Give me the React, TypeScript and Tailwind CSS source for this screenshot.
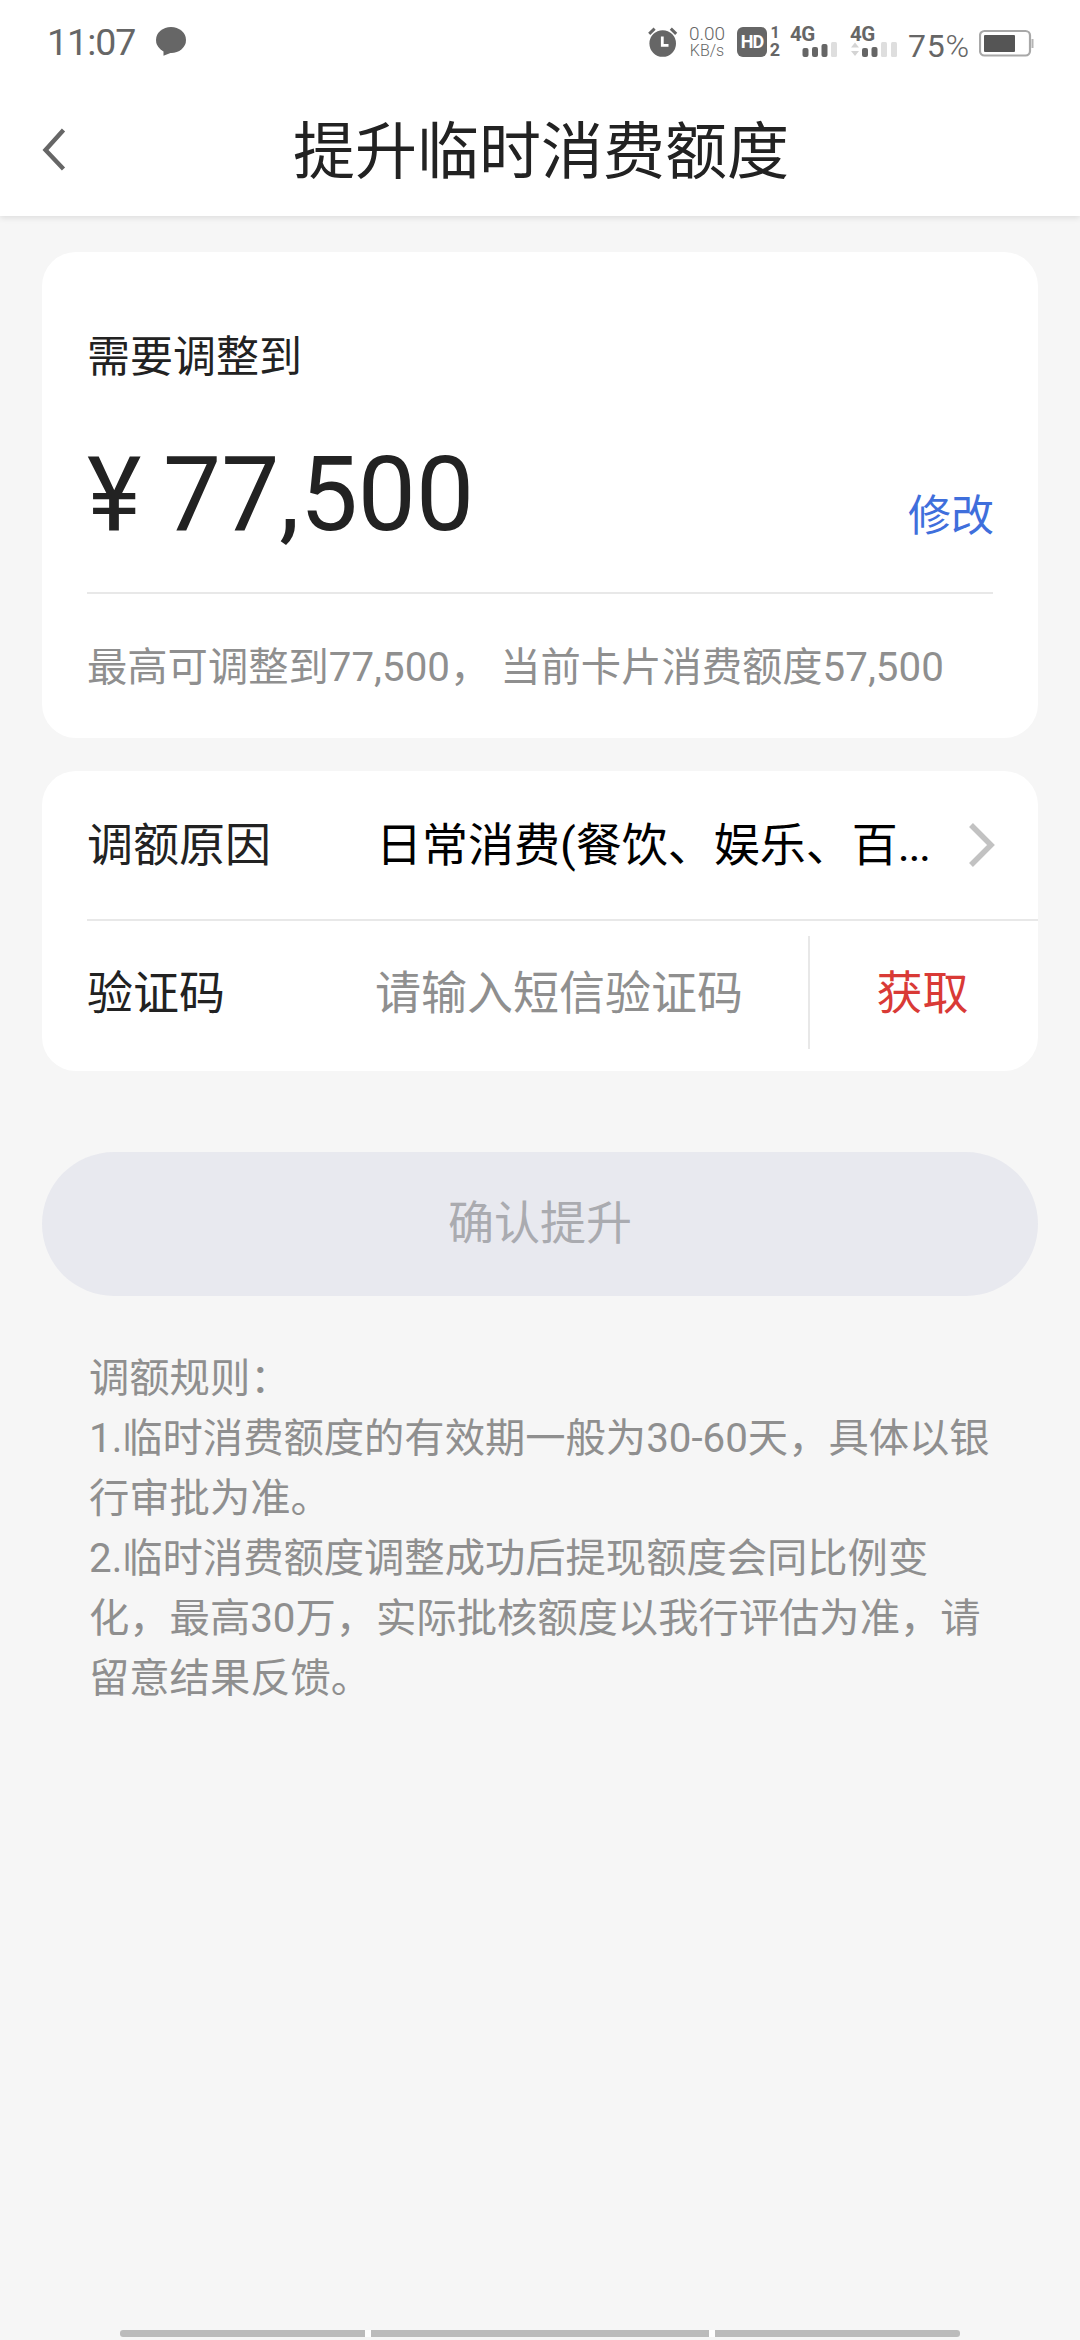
const rules = [
  '调额规则：',
  '1.临时消费额度的有效期一般为30-60天，具体以银',
  '行审批为准。',
  '2.临时消费额度调整成功后提现额度会同比例变',
  '化，最高30万，实际批核额度以我行评估为准，请',
  '留意结果反馈。',
];

function StatusBar() {
  return (
    <div className="flex h-[84px] items-start text-[#666666]">
      <span className="mt-[22px] ml-[47px] w-[92px] whitespace-nowrap text-[37.5px] leading-[40px] tracking-[-1px]">11:07</span>
      <svg className="mt-[26px] ml-[17px]" width="30" height="30" viewBox="0 0 30 30" fill="#666666">
        <ellipse cx="15" cy="14" rx="15" ry="13" />
        <path d="M7.5 22v7.8L17 26z" />
      </svg>

      <div className="ml-auto flex items-start">
        {/* Alarm */}
        <svg className="mt-[27px]" width="30" height="31" viewBox="0 0 30 31">
          <circle cx="14.7" cy="16.5" r="13.3" fill="#666666" />
          <path d="M1.2 6.8 6.6 1.6M22.8 1.6l5.4 5.2" stroke="#666666" strokeWidth="3" />
          <path d="M14.3 9.5v8.8h6.2" fill="none" stroke="#ffffff" strokeWidth="2.8" />
        </svg>

        <div className="mt-[25px] ml-[9px] flex w-[40px] flex-col items-center whitespace-nowrap">
          <span className="text-[19px] leading-[18px] font-light">0.00</span>
          <span className="text-[16px] leading-[16px] font-light">KB/s</span>
        </div>

        {/* HD 1/2 */}
        <div className="mt-[27px] ml-[10px] flex size-[30px] items-center justify-center rounded-[6px] bg-[#666666] text-[18px] leading-none font-bold tracking-[-1px] text-white">
          HD
        </div>
        <div className="mt-[24px] ml-[2px] flex w-[12px] flex-col items-center text-[16px] leading-[17px] font-bold">
          <span>1</span>
          <span className="text-[18px] leading-[18px]">2</span>
        </div>

        <div className="mt-[26px] ml-[9px] w-[50px]">
          <div className="h-[16px] text-[20.5px] leading-[17px] font-bold tracking-[-0.5px]">4G</div>
          <svg width="50" height="16" viewBox="0 0 50 16">
            <rect x="12.5" y="6" width="6" height="9" rx="2" fill="#666666" />
            <rect x="22" y="5" width="6" height="10" rx="2" fill="#666666" />
            <rect x="31.5" y="2" width="6" height="13" rx="2" fill="#666666" />
            <rect x="41" y="0" width="6" height="15" rx="1.5" fill="#dedede" />
          </svg>
        </div>
        <div className="mt-[26px] ml-[10px] w-[50px]">
          <div className="h-[16px] text-[20.5px] leading-[17px] font-bold tracking-[-0.5px]">4G</div>
          <svg width="50" height="16" viewBox="0 0 50 16">
            <path d="M1 5.5 5 .5l4 5zM1 9l4 5 4-5z" fill="#d4d4d4" />
            <rect x="12" y="6" width="6" height="9" rx="2" fill="#666666" />
            <rect x="21.5" y="5" width="6" height="10" rx="2" fill="#666666" />
            <rect x="31" y="0" width="6" height="15" rx="1.5" fill="#dedede" />
            <rect x="41" y="0" width="6" height="15" rx="1.5" fill="#dedede" />
          </svg>
        </div>

        <span className="mt-[27px] ml-[8px] w-[64px] whitespace-nowrap text-[32px] leading-[38px] tracking-[0.8px]">
          75<span className="font-light">%</span>
        </span>
        <svg className="mt-[29px] mr-[46px] ml-[7px]" width="55" height="29" viewBox="0 0 55 29">
          <rect x="1" y="2" width="50" height="24.5" rx="4.5" fill="none" stroke="#a8a8a8" strokeWidth="2.2" />
          <rect x="5" y="6" width="31" height="17" rx="1" fill="#555555" />
          <rect x="52.5" y="10" width="2" height="9" fill="#b5b5b5" />
        </svg>
      </div>
    </div>
  );
}

function Header() {
  return (
    <header className="bg-white shadow-[0_2px_6px_rgba(0,0,0,0.1)]">
      <StatusBar />
      <div className="flex h-[132px] items-center px-[42px]">
        <svg width="24" height="44" viewBox="0 0 24 44" fill="none">
          <path d="M21.5 2 3.5 22l18 19" stroke="#666666" strokeWidth="4.4" />
        </svg>
        <h1 className="mr-[22px] flex-1 pt-[6px] text-center text-[62px] leading-[80px] text-[#222222]">提升临时消费额度</h1>
      </div>
    </header>
  );
}

export default function App() {
  return (
    <div className="flex h-[2340px] w-[1080px] flex-col overflow-hidden bg-[#f6f6f6] font-[Roboto,'Noto_Sans_CJK_SC',sans-serif] text-[#222222]">
      <Header />

      <main className="flex flex-col px-[42px] pt-9">
        {/* Amount */}
        <section className="h-[486px] rounded-[34px] bg-white px-[45px] pt-[75px]">
          <div className="text-[43px] leading-[60px]">需要调整到</div>
          <div className="mt-[48px] flex h-[120px] items-baseline justify-between leading-[120px]">
            <div className="flex items-baseline">
              <span className="w-[76px] text-[103.5px]">¥</span>
              <span className="text-[103.5px]">77,500</span>
            </div>
            <button className="relative top-px left-px text-[43px] text-[#3f6fdc]">修改</button>
          </div>
          <div className="mt-[37px] h-[2px] bg-[#e8e8e8]" />
          <p className="mt-[44px] whitespace-pre text-[40.3px] leading-[60px] text-[#8f8f8f]">最高可调整到77,500， 当前卡片消费额度57,500</p>
        </section>

        {/* Reason and SMS code */}
        <section className="mt-[33px] h-[300px] rounded-[34px] bg-white pl-[45px] text-[46px] leading-[60px]">
          <div className="flex h-[150px] items-center border-b-2 border-[#e8e8e8]">
            <span className="w-[289px]">调额原因</span>
            <span className="w-[560px] whitespace-nowrap text-black">
              日常消费(餐饮、娱乐、百<span className="tracking-[-1.5px]">...</span>
            </span>
            <svg className="ml-[32px]" width="28" height="44" viewBox="0 0 28 44" fill="none">
              <path d="m3 2 20 20L3 42" stroke="#c2c2c2" strokeWidth="5.5" />
            </svg>
          </div>
          <div className="flex h-[143px] items-center">
            <span className="w-[288px]">验证码</span>
            <span className="flex-1 whitespace-nowrap text-[#8f8f8f]">请输入短信验证码</span>
            <button className="h-[113px] w-[230px] border-l-2 border-[#e8e8e8] pr-[3px] text-[#d93a36]">获取</button>
          </div>
        </section>

        <button className="mt-[81px] h-[144px] rounded-full bg-[#e8e9ef] pb-[2px] text-[46px] text-[#aaabb0]">确认提升</button>

        <div className="mt-[53px] pl-[47px] text-[40.3px] leading-[60px] whitespace-nowrap text-[#8f8f8f]">
          {rules.map((line) => (
            <p key={line}>{line}</p>
          ))}
        </div>
      </main>

      {/* Navigation hint */}
      <div className="mx-auto mt-auto mb-[3px] flex h-[7px] w-[840px] gap-[6px] overflow-hidden rounded-[3px] bg-white">
        <div className="w-[245px] bg-[#bbbbbb]" />
        <div className="flex-1 bg-[#bbbbbb]" />
        <div className="w-[245px] bg-[#bbbbbb]" />
      </div>
    </div>
  );
}
